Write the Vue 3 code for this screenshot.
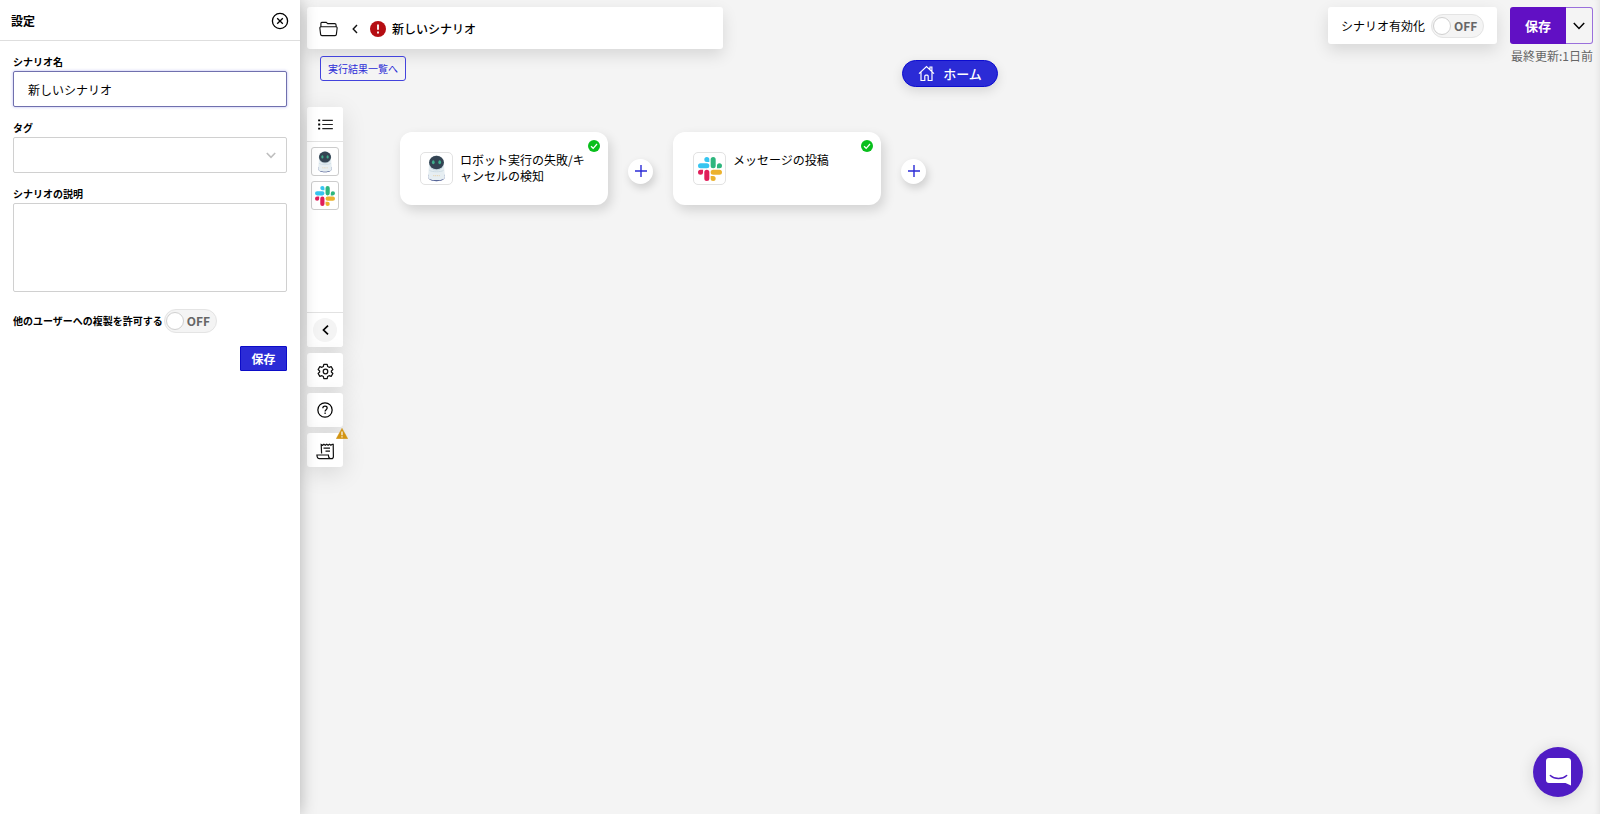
<script setup>
import { ref } from 'vue'

const name = ref('新しいシナリオ')
const tag = ref('')
const description = ref('')
const allowCopy = ref(false)
const enabled = ref(false)

const slackPaths = [
  { fill: '#e01e5a', d: 'M5.042 15.165a2.528 2.528 0 0 1-2.52 2.523A2.528 2.528 0 0 1 0 15.165a2.527 2.527 0 0 1 2.522-2.52h2.52v2.52zM6.313 15.165a2.527 2.527 0 0 1 2.521-2.52 2.527 2.527 0 0 1 2.521 2.52v6.313A2.528 2.528 0 0 1 8.834 24a2.528 2.528 0 0 1-2.521-2.522v-6.313z' },
  { fill: '#36c5f0', d: 'M8.834 5.042a2.528 2.528 0 0 1-2.521-2.52A2.528 2.528 0 0 1 8.834 0a2.528 2.528 0 0 1 2.521 2.522v2.52H8.834zM8.834 6.313a2.528 2.528 0 0 1 2.521 2.521 2.528 2.528 0 0 1-2.521 2.521H2.522A2.528 2.528 0 0 1 0 8.834a2.528 2.528 0 0 1 2.522-2.521h6.312z' },
  { fill: '#2eb67d', d: 'M18.956 8.834a2.528 2.528 0 0 1 2.522-2.521A2.528 2.528 0 0 1 24 8.834a2.528 2.528 0 0 1-2.522 2.521h-2.522V8.834zM17.688 8.834a2.528 2.528 0 0 1-2.523 2.521 2.527 2.527 0 0 1-2.52-2.521V2.522A2.527 2.527 0 0 1 15.165 0a2.528 2.528 0 0 1 2.523 2.522v6.312z' },
  { fill: '#ecb22e', d: 'M15.165 18.956a2.528 2.528 0 0 1 2.523 2.522A2.528 2.528 0 0 1 15.165 24a2.527 2.527 0 0 1-2.52-2.522v-2.522h2.52zM15.165 17.688a2.527 2.527 0 0 1-2.52-2.523 2.526 2.526 0 0 1 2.52-2.52h6.313A2.527 2.527 0 0 1 24 15.165a2.528 2.528 0 0 1-2.522 2.523h-6.313z' },
]

const steps = [
  { app: 'robot', title: 'ロボット実行の失敗/キャンセルの検知' },
  { app: 'slack', title: 'メッセージの投稿' },
]
</script>

<template>
  <div class="page">
    <svg class="defs" aria-hidden="true">
      <symbol id="slack" viewBox="0 0 24 24">
        <path v-for="p in slackPaths" :key="p.fill" :fill="p.fill" :d="p.d" />
      </symbol>
      <symbol id="robot" viewBox="0 0 24 32">
        <path d="M2 25.500c0 3.500 4 5.500 10 5.500s10-2 10-5.500v-2H2z" fill="#26377a" />
        <path d="M3 13c0-2 3-3 9-3s9 1 9 3l1 13c0 2.500-4 4-10 4S2 28.500 2 26z" fill="#e6eef2" />
        <path d="M3.500 18c3 2.500 14 2.500 17 0" fill="none" stroke="#c8d9e2" />
        <path d="M8 24.500h8" stroke="#e6cfa4" stroke-dasharray="1.500 .8" />
        <circle cx="12" cy="9.500" r="9" fill="#c9dae2" />
        <ellipse cx="12" cy="8.800" rx="8.800" ry="8" fill="#344453" />
        <ellipse cx="8.200" cy="8.600" rx="1.600" ry="2.300" fill="#3fae8d" />
        <ellipse cx="15.800" cy="8.600" rx="1.600" ry="2.300" fill="#3fae8d" />
      </symbol>
    </svg>

    <aside class="panel">
      <header class="panel-head">
        <h1>設定</h1>
        <button class="bare" type="button" aria-label="閉じる">
          <svg width="18" height="18" viewBox="0 0 18 18" fill="none" stroke="#000" stroke-width="1.300">
            <circle cx="9" cy="9" r="7.600" /><path d="M6.200 6.200l5.600 5.600M11.800 6.200l-5.600 5.600" />
          </svg>
        </button>
      </header>
      <form class="form" @submit.prevent>
        <div class="field">
          <label for="name">シナリオ名</label>
          <input id="name" v-model="name" class="box active" type="text">
        </div>
        <div class="field">
          <label for="tag">タグ</label>
          <div class="select-wrap">
            <select id="tag" v-model="tag" class="box"><option value=""></option></select>
            <svg class="caret" width="10" height="7" viewBox="0 0 10 7" fill="none" stroke="#bfbfbf" stroke-width="1.600"><path d="M.8 1l4.200 4.400L9.200 1" /></svg>
          </div>
        </div>
        <div class="field">
          <label for="desc">シナリオの説明</label>
          <textarea id="desc" v-model="description" class="box area"></textarea>
        </div>
        <div class="copy-row">
          <label for="copy">他のユーザーへの複製を許可する</label>
          <label class="switch"><input id="copy" v-model="allowCopy" type="checkbox"><span>OFF</span></label>
        </div>
        <button class="submit" type="submit">保存</button>
      </form>
    </aside>

    <main class="main">
      <header class="top">
        <div class="top-left">
          <div class="crumb card">
            <svg width="19" height="16" viewBox="0 0 20 16" fill="none" stroke="#111" stroke-width="1.200">
              <path d="M2 6V2.200C2 1.400 2.400 1 3 1h4.600l1.600 1.400h7.300c.9 0 1.500.5 1.500 1.300V6" />
              <path d="M2.300 5.600h15.400c.9 0 1.500.6 1.400 1.400l-.8 6.700c-.1.800-.6 1.300-1.400 1.300H3.100c-.8 0-1.300-.5-1.400-1.300L.9 7c-.1-.8.500-1.400 1.400-1.400z" />
            </svg>
            <svg class="back" width="6" height="10" viewBox="0 0 6 10" fill="none" stroke="#111" stroke-width="1.400"><path d="M5 1L1.200 5 5 9" /></svg>
            <svg width="16" height="16" viewBox="0 0 16 16"><circle cx="8" cy="8" r="8" fill="#b50d12" /><path d="M8 3.600v5.200M8 10.600v1.900" stroke="#fff" stroke-width="1.800" /></svg>
            <strong>新しいシナリオ</strong>
          </div>
          <a class="results" href="#">実行結果一覧へ</a>
        </div>
        <div class="top-right">
          <div class="enable card">
            <label for="enabled">シナリオ有効化</label>
            <label class="switch"><input id="enabled" v-model="enabled" type="checkbox"><span>OFF</span></label>
          </div>
          <div class="save">
            <div class="split">
              <button class="save-main" type="button">保存</button>
              <button class="save-more" type="button" aria-label="その他">
                <svg width="12" height="8" viewBox="0 0 12 8" fill="none" stroke="#000" stroke-width="1.500"><path d="M.8 1L6 6.400 11.200 1" /></svg>
              </button>
            </div>
            <p>最終更新:1日前</p>
          </div>
        </div>
      </header>

      <button class="home" type="button">
        <svg width="17" height="17" viewBox="0 0 17 17" fill="none" stroke="#fff" stroke-width="1.200">
          <path d="M1 8.600L8.500 1.500 16 8.600M12 4.600V2h1.900v4.400M3 7.200v8.300h3.800v-4.300c0-.6.400-1 1-1h1.400c.6 0 1 .4 1 1v4.300H14V7.200" />
        </svg>
        <span>ホーム</span>
      </button>

      <div class="work">
        <nav class="rail">
          <div class="rail-list card">
            <button class="cell" type="button" aria-label="一覧">
              <svg width="15" height="11" viewBox="0 0 16 12" stroke="#222" stroke-width="1.200"><path d="M4.500 1.500H16M4.500 6H16M4.500 10.500H16" /><path d="M0 1.500h2.200M0 6h2.200M0 10.500h2.200" stroke="#000" stroke-width="2" /></svg>
            </button>
            <div class="apps">
              <button class="app" type="button" aria-label="ロボット"><svg width="18" height="22"><use href="#robot" /></svg></button>
              <button class="app" type="button" aria-label="Slack"><svg width="20" height="20"><use href="#slack" /></svg></button>
            </div>
            <button class="cell" type="button" aria-label="折りたたむ">
              <span class="fold"><svg width="7" height="10" viewBox="0 0 7 10" fill="none" stroke="#000" stroke-width="1.700"><path d="M6 .7L1.500 5 6 9.300" /></svg></span>
            </button>
          </div>
          <button class="cell card low" type="button" aria-label="設定">
            <svg width="17" height="17" viewBox="0 0 18 18" fill="none" stroke="#111" stroke-width="1.300" stroke-linejoin="round">
              <path d="M7.200 1.500h3.600l.5 2.200 1.500.9 2.200-.8 1.800 3.100L15.200 8.400v1.200l1.600 1.500-1.800 3.100-2.200-.8-1.500.9-.5 2.200H7.200l-.5-2.200-1.500-.9-2.200.8-1.800-3.100 1.600-1.500V8.400L1.200 6.900 3 3.800l2.200.8 1.500-.9z" /><circle cx="9" cy="9" r="2.400" />
            </svg>
          </button>
          <button class="cell card" type="button" aria-label="ヘルプ">
            <svg width="16" height="16" viewBox="0 0 17 17" fill="none" stroke="#000" stroke-width="1.300">
              <circle cx="8.500" cy="8.500" r="7.600" /><path d="M6.200 6.700c0-1.300 1-2.200 2.300-2.200s2.300.8 2.300 2c0 1.700-2.200 1.700-2.200 3.500M8.600 11.200v1.500" />
            </svg>
          </button>
          <button class="cell card low log" type="button" aria-label="ログ">
            <svg width="18" height="17" viewBox="0 0 18 17" fill="none" stroke="#111" stroke-width="1.200">
              <path d="M5.600 10.500L5.200 1.500l1.400.7 1.300-.9 1.400.9 1.400-.9 1.400.9 1.400-.9 1.400.9 1.300-.9 1 0 .2 12.200c0 1.400-.8 2.200-2 2.200H3.600c-1.600 0-2.600-1.500-2.700-3.700h11.500c.1 2.200.8 3.700 2 3.700" /><path d="M7.500 5.200h6.500M9.500 8.200h4.500" />
            </svg>
            <svg class="warn" width="12" height="11" viewBox="0 0 12 11"><path d="M6 .3L11.800 10.700H.2z" fill="#d29412" stroke="#d29412" stroke-width=".4" stroke-linejoin="round" /><path d="M6 3.600v3.600M6 8.300v1.200" stroke="#fff" stroke-width="1.200" /></svg>
          </button>
        </nav>

        <section class="flow">
          <template v-for="step in steps" :key="step.app">
            <article class="step">
              <span class="step-icon">
                <svg v-if="step.app === 'robot'" width="21" height="27"><use href="#robot" /></svg>
                <svg v-else width="24" height="24"><use href="#slack" /></svg>
              </span>
              <p>{{ step.title }}</p>
              <svg class="ok" width="12" height="12" viewBox="0 0 12 12" fill="none"><circle cx="6" cy="6" r="6" fill="#08bf1c" /><path d="M3 6.200l2.200 2.100L9 4" stroke="#fff" stroke-width="1.200" /></svg>
            </article>
            <button class="add" type="button" aria-label="追加">
              <svg width="12" height="12" viewBox="0 0 12 12" stroke="#2b2bd6" stroke-width="1.400"><path d="M6 0v12M0 6h12" /></svg>
            </button>
          </template>
        </section>
      </div>

      <button class="chat" type="button" aria-label="チャット">
        <svg width="25" height="28" viewBox="0 0 25 28"><path d="M3 0h19c1.700 0 3 1.300 3 3v24.500L19.500 25H3c-1.700 0-3-1.300-3-3V3c0-1.700 1.300-3 3-3z" fill="#fff" /><path d="M4.300 17.500c4.500 4 12 4 16.400 0" fill="none" stroke="#4f1cc4" stroke-width="1.400" stroke-linecap="round" /></svg>
      </button>
    </main>
  </div>
</template>

<style>
body { margin: 0; }
</style>

<style scoped>
.page {
  display: grid;
  grid-template-columns: 300px 1fr;
  min-height: 100vh;
  background: #f4f4f4;
  color: #000;
  font: 12px/16px "Noto Sans CJK JP", sans-serif;
}
.page *, .page { box-sizing: border-box; }
button, input, select, textarea { font: inherit; color: inherit; margin: 0; }
button { display: flex; align-items: center; justify-content: center; padding: 0; border: 0; cursor: pointer; }
h1, p { margin: 0; }
svg { display: block; flex: none; }
.defs { position: absolute; width: 0; height: 0; }
.bare { background: none; }
.card { background: #fff; border-radius: 3px; box-shadow: 0 6px 16px rgba(0, 0, 0, .12); }

.panel { position: relative; z-index: 1; background: #fff; box-shadow: 0 0 16px rgba(0, 0, 0, .28); }
.panel-head {
  display: flex; align-items: center; justify-content: space-between;
  height: 41px; padding: 2px 11px 0; border-bottom: 1px solid #dedede;
}
h1 { font-size: 12px; font-weight: 700; }
.form { display: flex; flex-direction: column; padding: 13px; }
.field { display: flex; flex-direction: column; gap: 1px; margin-bottom: 13px; }
.field label, .copy-row > label:first-child { font-size: 10px; font-weight: 700; }
.box { width: 100%; height: 36px; padding: 0 14px; border: 1px solid #d0d0d0; border-radius: 2px; background: #fff; outline: 0; appearance: none; }
.active { border-color: #7070ae; box-shadow: 0 0 3px rgba(43, 43, 214, .35); }
.select-wrap { position: relative; }
.caret { position: absolute; right: 11px; top: 15px; pointer-events: none; }
.area { height: 89px; resize: none; }
.copy-row { display: flex; align-items: center; gap: 1px; margin-top: 4px; }
.switch {
  display: flex; align-items: center; gap: 3px; height: 24px; width: 53px; padding: 0 2px 0 1px;
  border: 1px solid #e4e4e4; border-radius: 12px; background: #f4f4f4; color: #666; font-weight: 700;
}
.switch input { appearance: none; width: 18px; height: 18px; border: 1px solid #d0d0d0; border-radius: 50%; background: #fff; flex: none; }
.submit { align-self: flex-end; width: 47px; height: 25px; margin-top: 13px; background: #2b2bd6; border: 1px solid #0c0cc8; border-radius: 1px; color: #fff; font-weight: 700; }

.main { position: relative; display: flex; flex-direction: column; padding: 7px; overflow: hidden; box-shadow: inset -6px 0 6px -5px rgba(0, 0, 0, .08); }
.top { display: flex; justify-content: space-between; align-items: flex-start; }
.top-left { display: flex; flex-direction: column; align-items: flex-start; gap: 7px; }
.crumb { display: flex; align-items: center; width: 416px; height: 42px; padding: 2px 12px 0; }
.back { margin: 0 12px 0 14px; }
.crumb strong { margin-left: 6px; font-weight: 500; }
.results { display: flex; align-items: center; height: 25px; margin-left: 13px; padding: 0 7px; border: 1px solid #4343dc; border-radius: 3px; color: #2b2bd6; font-size: 10px; text-decoration: none; }
.top-right { display: flex; align-items: flex-start; gap: 13px; }
.enable { display: flex; align-items: center; justify-content: space-between; width: 169px; height: 37px; padding: 0 13px; }
.save { display: flex; flex-direction: column; align-items: flex-end; gap: 4px; color: #666; }
.split { display: flex; height: 37px; color: #000; }
.save-main { width: 56px; border-radius: 3px 0 0 3px; background: #6110c4; color: #fff; font-size: 13px; font-weight: 700; }
.save-more { width: 27px; border: 1px solid #9a70dc; border-left: 0; border-radius: 0 3px 3px 0; background: #f4f4f4; }

.home {
  position: absolute; top: 60px; left: 50%; transform: translateX(-50%);
  gap: 8px; width: 96px; height: 27px; border: 1px solid #0c0cd0; border-radius: 14px;
  background: #2b2bd6; color: #fff; font-size: 13px; font-weight: 500; box-shadow: 0 4px 12px rgba(0, 0, 0, .12);
}
.work { display: flex; align-items: flex-start; gap: 57px; margin-top: 26px; }
.rail { display: flex; flex-direction: column; gap: 6px; width: 36px; }
.rail .card { box-shadow: 0 6px 24px rgba(0, 0, 0, .12); }
.cell { width: 100%; height: 34px; background: #fff; border-radius: 3px; }
.low { padding-top: 3px; }
.apps { display: flex; flex-direction: column; align-items: center; gap: 5px; height: 172px; padding: 5px 1px 5px 0; border: solid #e2e2e2; border-width: 1px 0; }
.app { width: 28px; height: 29px; border: 1px solid #ccc; border-radius: 3px; background: #fff; }
.fold { display: flex; align-items: center; justify-content: center; width: 24px; height: 24px; border-radius: 50%; background: #f4f4f4; }
.log { position: relative; }
.warn { position: absolute; top: -5px; right: -5px; }

.flow { display: flex; align-items: center; gap: 20px; padding-top: 25px; }
.step { position: relative; display: flex; gap: 7px; width: 208px; height: 73px; padding: 20px 20px 0; border-radius: 12px; background: #fff; box-shadow: 3px 5px 12px rgba(0, 0, 0, .14); }
.step-icon { display: flex; align-items: center; justify-content: center; flex: none; width: 33px; height: 33px; border: 1px solid #e2e2e2; border-radius: 5px; }
.step p { width: 126px; margin-right: -12px; flex: none; line-height: 16px; word-break: break-all; }
.ok { position: absolute; top: 8px; right: 8px; }
.add { width: 25px; height: 25px; margin-top: 5px; border-radius: 50%; background: #fff; box-shadow: 2px 4px 8px rgba(0, 0, 0, .16); }
.chat { position: fixed; right: 17px; bottom: 17px; width: 50px; height: 50px; border-radius: 50%; background: #4f1cc4; box-shadow: 0 2px 16px rgba(0, 0, 0, .14); }
</style>
